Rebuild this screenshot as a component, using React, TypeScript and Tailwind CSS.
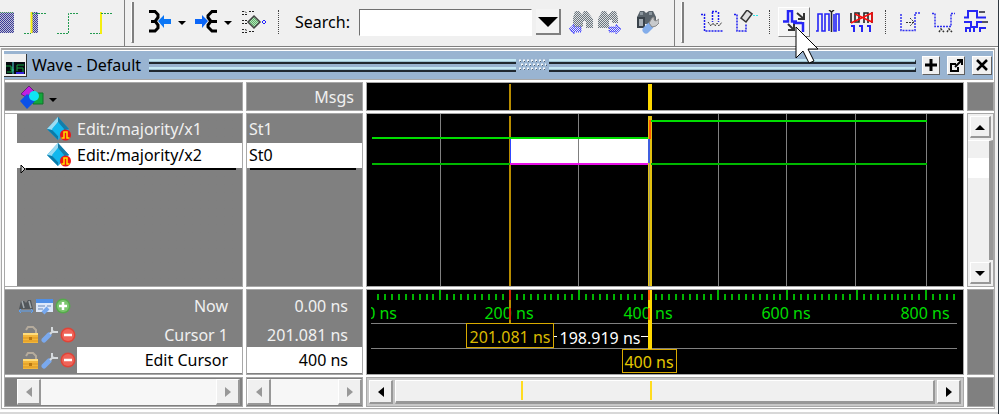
import type { ReactNode } from "react";

const BLUE = "#1c1cf0";
const GREEN = "#00dd00";
const YELLOW = "#ffd800";

function Icon({ children, w = 24, h = 24 }: { children: ReactNode; w?: number; h?: number }) {
  return (
    <svg width={w} height={h} viewBox={`0 0 ${w} ${h}`} fill="none" aria-hidden="true" className="block shrink-0">
      {children}
    </svg>
  );
}

function ToolButton({ label, className = "", children }: { label: string; className?: string; children: ReactNode }) {
  return (
    <button type="button" aria-label={label} className={`shrink-0 ${className}`}>
      {children}
    </button>
  );
}

function Caret() {
  return (
    <Icon w={12} h={24}>
      <path d="M2 11h8l-4 4z" fill="#000" />
    </Icon>
  );
}

function Handle() {
  return <div className="ml-1 h-[41px] w-[3px] shrink-0 border-r-2 border-b border-l border-[#808080] border-l-white" />;
}

function DottedRule({ className = "" }: { className?: string }) {
  return <div className={`h-6 w-0 shrink-0 border-l border-dotted border-[#444] ${className}`} />;
}

function Hatch({ id, color }: { id: string; color: string }) {
  return (
    <defs>
      <pattern id={id} width="2" height="2" patternUnits="userSpaceOnUse">
        <path d="M0 0h1v1h-1zM1 1h1v1h-1z" fill={color} />
      </pattern>
    </defs>
  );
}

function Toolbar() {
  return (
    <div className="flex h-[47px] border-b border-[#808080] bg-[#f0f0f0]">
      <div className="flex h-[46px] w-[125px] shrink-0 items-center border-r border-[#808080] pb-[2px]">
        <ToolButton label="Pattern">
          <Icon w={14}>
            <Hatch id="hatchA" color="#3a3a9a" />
            <path d="M0 2h14v21H0z" fill="#c2c2d4" />
            <path d="M0 2h14v21H0z" fill="url(#hatchA)" />
            <path d="M0 2.5h14" stroke="#3c8a5c" strokeDasharray="1 1" />
          </Icon>
        </ToolButton>
        <ToolButton label="Previous pattern" className="ml-[10px]">
          <Icon>
            <Hatch id="hatchB" color="#3a3a9a" />
            <path d="M8 2h6v21H8z" fill="#c2c2d4" />
            <path d="M8 2h6v21H8z" fill="url(#hatchB)" />
            <path d="M7.5 2v21" stroke="#f4ee10" strokeWidth="2" />
            <path d="M0 23.500h7M8 3.500h14" stroke="#239a50" strokeDasharray="2 1" />
          </Icon>
        </ToolButton>
        <ToolButton label="Rising edge" className="ml-[9px]">
          <Icon>
            <path d="M0 23.500h11.500V3.500H22" stroke="#239a50" strokeDasharray="2 1" />
          </Icon>
        </ToolButton>
        <ToolButton label="Next rising edge" className="ml-[9px]">
          <Icon>
            <path d="M11 2v22" stroke="#f4ee10" strokeWidth="2" />
            <path d="M0 23.500h10M11 3.500h11" stroke="#239a50" strokeDasharray="2 1" />
          </Icon>
        </ToolButton>
      </div>

      <div className="ml-[2px] flex h-[46px] w-[548px] shrink-0 items-center border-r border-[#808080] pb-[2px]">
        <Handle />
        <ToolButton label="Find previous" className="ml-[14px]">
          <Icon>
            <path d="M1 1.500h6l3 3v3l-3 4H3M7 11l3 4v3l-3 3H1" stroke="#000" strokeWidth="3" />
            <path d="M10 11l6-6v4h7v5h-7v4z" fill="#0b76f5" />
          </Icon>
        </ToolButton>
        <ToolButton label="Find previous options" className="ml-1"><Caret /></ToolButton>
        <ToolButton label="Find next" className="ml-[6px]">
          <Icon>
            <path d="M23 1.500h-5l-4 4v2l3 4h6M17 11l-3 4v2l4 4h5" stroke="#000" strokeWidth="3" />
            <path d="M14 11l-6-6v4H1v5h7v4z" fill="#0b66f8" />
          </Icon>
        </ToolButton>
        <ToolButton label="Find next options" className="ml-1"><Caret /></ToolButton>
        <ToolButton label="Trace" className="ml-2">
          <Icon>
            <Hatch id="hatchC" color="#5fae6a" />
            <path d="M0 1.500h3l2 2M0 4.500h5M7 1.500h5M0 10.500h5M0 13.500h5M0 19.500h3l2 1M0 22.500h5M7 21.500h5" stroke="#222" strokeDasharray="2 1" />
            <path d="M12 6l6 6-6 6-6-6z" fill="#b4e4ba" />
            <path d="M12 6l6 6-6 6-6-6z" fill="url(#hatchC)" stroke="#444" strokeWidth="1.500" />
            <path d="M22 10l2 2-2 2-2-2z" stroke="#2020ff" />
          </Icon>
        </ToolButton>
        <DottedRule className="ml-3" />
        <label htmlFor="search" className="ml-4 w-14 shrink-0">Search:</label>
        <input
          id="search"
          type="text"
          className="ml-2 h-[27px] w-[173px] shrink-0 border border-white border-t-[#707070] border-l-[#707070] bg-white px-1 outline-none"
        />
        <ToolButton label="Search history" className="ml-1 flex h-[26px] w-[25px] items-center justify-center border-r-2 border-b-2 border-[#808080] bg-[#f4f4f4]">
          <Icon w={20} h={20}><path d="M0 6h20l-10 10z" fill="#000" /></Icon>
        </ToolButton>
        <ToolButton label="Search backward" className="ml-2">
          <Icon>
            <Hatch id="hatchD" color="#6c767e" />
            <Hatch id="hatchE" color="#4a4aff" />
            <path d="M6 1h4l3 4 2-4h3l6 8v9h-7v-7h-3v6H4V8z" fill="#dde0e2" />
            <path d="M6 1h4l3 4 2-4h3l6 8v9h-7v-7h-3v6H4V8z" fill="url(#hatchD)" />
            <path d="M0 19l5-5v3h7v5H5v2z" fill="url(#hatchE)" stroke="#4c4cff" strokeDasharray="1 1" />
          </Icon>
        </ToolButton>
        <ToolButton label="Search forward" className="ml-1">
          <Icon>
            <path d="M5 1h4l2 4 4-4h4l2 7v5h-6v-3h-3v8H1V9z" fill="#dde0e2" />
            <path d="M5 1h4l2 4 4-4h4l2 7v5h-6v-3h-3v8H1V9z" fill="url(#hatchD)" />
            <path d="M24 19l-5-5v3h-7v5h7v2z" fill="url(#hatchE)" stroke="#4c4cff" strokeDasharray="1 1" />
          </Icon>
        </ToolButton>
        <ToolButton label="Search options" className="ml-[14px]">
          <Icon>
            <path d="M5 1h4l2 2 3-2h4l3 6v7H2V7z" fill="#59636b" />
            <path d="M2 7h8v11H2z" fill="#39424a" />
            <path d="M4 9h4v7H4z" fill="#a5adb4" />
            <path d="M5 2h3v3H5zM14 2h3v3h-3z" fill="#8b969e" />
            <path d="M11 20l4-4" stroke="#83adea" strokeWidth="7" strokeLinecap="round" />
            <path d="M14 13l3-5 2-1v3l2 1 3-2v4l-3 3-4 1z" fill="#c8cacc" stroke="#888" />
          </Icon>
        </ToolButton>
      </div>

      <div className="ml-[2px] flex h-[46px] min-w-0 flex-1 items-center pb-[2px]">
        <Handle />
        <ToolButton label="Insert pulse" className="ml-4">
          <Icon>
            <path d="M1 4.500h3.500v16.500h18M12 1.500h6M12.500 2v10M18.500 2v10" stroke={BLUE} strokeWidth="1.500" strokeDasharray="2 1" />
            <path d="M8 12l3 4 2-3 2 3 2-3 2 3 3-4" stroke="#333" strokeDasharray="2 1" />
          </Icon>
        </ToolButton>
        <ToolButton label="Delete edge" className="ml-[10px]">
          <Icon>
            <path d="M0 4.500h3v16.500h9v-7" stroke={BLUE} strokeWidth="1.500" strokeDasharray="2 1" />
            <path d="M13 0l5 4-6 8-5-4z" fill="#ddd" stroke="#333" strokeWidth="1.500" />
            <path d="M19 5.500h5" stroke="#2ee8ea" strokeDasharray="2 1" />
          </Icon>
        </ToolButton>
        <DottedRule className="ml-[11px]" />
        <ToolButton label="Invert" className="ml-2 flex h-[30px] w-8 items-center justify-center border border-white border-r-[#808080] border-b-[#808080] bg-[#f4f4f4]">
          <Icon>
            <path d="M1 11.500h5V1h4v10.500h5M11 13h9M21 12v10" stroke="#2525f5" strokeWidth="2.500" />
            <path d="M15 3l7 6M22 3v6h-6M6 14l6 6M12 14v6H6" stroke="#333" strokeWidth="2" />
          </Icon>
        </ToolButton>
        <ToolButton label="Mirror" className="ml-[6px]">
          <Icon>
            <path d="M0 21h2V4h4v17h3V4h4v17M18 4v17h2V4h3v17" stroke="#2525f5" strokeWidth="1.600" />
            <path d="M13 0l2.500 2L18 0M15.500 2v20" stroke="#222" strokeWidth="1.500" />
          </Icon>
        </ToolButton>
        <ToolButton label="Value" className="ml-[10px]">
          <Icon>
            <path d="M1 3v10M5 12V3h4v9zM14 13V3h4v10M22 2v11" stroke="#222" strokeWidth="1.600" />
            <path d="M1 16h3v6M9 16h3v6M17 16h3v6" stroke="#2525f5" strokeWidth="2" />
            <path d="M1 13L22 3v9L5 4" stroke="#fa0c0c" strokeWidth="1.600" />
          </Icon>
        </ToolButton>
        <DottedRule className="ml-[11px]" />
        <ToolButton label="Stretch edge" className="ml-3">
          <Icon>
            <path d="M3 4v16.500h14V3h5" stroke="#3030ef" strokeWidth="1.500" strokeDasharray="2 1" />
            <path d="M8 12.500h9M12 8l4 4-4 4" stroke="#333" strokeDasharray="2 1" />
          </Icon>
        </ToolButton>
        <ToolButton label="Move edge" className="ml-[10px]">
          <Icon>
            <path d="M0 3.500h3v13h16V3.500h4" stroke="#3030ef" strokeWidth="1.500" strokeDasharray="2 1" />
            <path d="M7 22l2-3 3 3M15 22l2-3 3 3" stroke="#333" strokeWidth="1.500" strokeDasharray="2 1" />
          </Icon>
        </ToolButton>
        <ToolButton label="Extend all waves" className="ml-2">
          <Icon>
            <path d="M0 7.500h4V1h9v6.500h9" stroke="#2525f5" strokeWidth="2" />
            <path d="M0 12h7v5h6v-5h5M2 22v-4h4v4M10 22v-5M16 22v-4h6" stroke="#2525f5" strokeWidth="2" />
            <path d="M15 2h6M18 12h6" stroke="#223" strokeWidth="1.500" />
          </Icon>
        </ToolButton>
      </div>
    </div>
  );
}

function Grooves({ end = false }: { end?: boolean }) {
  const edge = end ? "border-r border-r-[#202830]" : "";
  return (
    <div className="flex min-w-0 flex-1 flex-col gap-[3px]">
      <div className={`h-[5px] border-t-2 border-b-2 border-t-[#c4e8f5] border-b-[#202830] bg-[#9cc0d0] ${edge}`} />
      <div className={`h-[5px] border-t-2 border-b-2 border-t-[#c4e8f5] border-b-[#202830] bg-[#9cc0d0] ${edge}`} />
    </div>
  );
}

const titleButton =
  "flex h-[19px] shrink-0 items-center justify-center border border-white border-r-[#606060] border-b-[#606060] bg-[#f0f0f0]";

function TitleBar() {
  return (
    <div className="flex h-7 items-center bg-[#99b4d1] pr-[1px]">
      <Icon w={23} h={23}>
        <path d="M0 0h23v23H0z" fill="#333" />
        <path d="M0 0h22v22H0z" fill="#f0f0f0" />
        <path d="M2 8h19v12H2z" fill="#050a10" />
        <path d="M2 12h5v4h3M3 18h5v-5M13 17v-6h7M13 14h6v4" stroke="#12a03c" />
        <path d="M9 8v12" stroke="#54dde0" />
        <path d="M12 19h8" stroke="#3424dd" strokeWidth="2" />
      </Icon>
      <h1 className="ml-[5px] w-[117px] shrink-0">Wave - Default</h1>
      <Grooves />
      <Icon w={33} h={14}>
        <path d="M3 2.500h27M5 6.500h25M3 10.500h27" stroke="#f4f8fb" strokeWidth="2" strokeDasharray="2 2" />
        <path d="M4 3.500h27M6 7.500h25M4 11.500h27" stroke="#526070" strokeDasharray="1 3" />
      </Icon>
      <Grooves end />
      <div className="ml-[6px] flex gap-[7px]">
        <button type="button" aria-label="Zoom pane" className={`w-[18px] ${titleButton}`}>
          <Icon w={12} h={12}><path d="M6 0v12M0 6h12" stroke="#000" strokeWidth="3" /></Icon>
        </button>
        <button type="button" aria-label="Undock" className={`w-[18px] ${titleButton}`}>
          <Icon w={13} h={13}>
            <path d="M6 5H1v7h7V8" stroke="#000" strokeWidth="2" />
            <path d="M5 8l7-7M7 1h5v5" stroke="#000" strokeWidth="2" />
          </Icon>
        </button>
        <button type="button" aria-label="Close" className={`w-5 ${titleButton}`}>
          <Icon w={12} h={12}><path d="M1 1l10 10M11 1L1 11" stroke="#000" strokeWidth="2.500" /></Icon>
        </button>
      </div>
    </div>
  );
}

function SignalIcon() {
  return (
    <Icon w={24} h={24}>
      <path d="M11 0l11 12-11 11L0 12z" fill="#22a6dc" />
      <path d="M11 0L0 12l5 1 6-8z" fill="#9adcf3" />
      <path d="M11 0l11 12-5 1-6-8z" fill="#147da9" />
      <path d="M0 12l11 11v-4l-6-6z" fill="#087ba9" />
      <path d="M11 5l6 7-6 7-6-7z" fill="#10b8ee" />
      <circle cx="18.500" cy="18" r="5.500" fill="#ee1414" />
      <path d="M14.500 21h2.500v-6h3v6h2.500" stroke="#ffe000" strokeWidth="1.500" />
    </Icon>
  );
}

function WrenchIcon() {
  return (
    <Icon w={17} h={17}>
      <path d="M3 14l5-5" stroke="#7aa9ee" strokeWidth="5" strokeLinecap="round" />
      <path d="M9 8l3-3M11 1v4l2 1h4" stroke="#d6dadd" strokeWidth="2" />
    </Icon>
  );
}

function LockIcon() {
  return (
    <Icon w={17} h={17}>
      <path d="M4 4l2-3h5l3 3v3" stroke="#b5ab9c" strokeWidth="2" />
      <path d="M1 7h15v10H1z" fill="#f3b63a" />
      <path d="M1 7h15v2H1z" fill="#ffdc7c" />
      <path d="M1 12h15M1 15h15" stroke="#dc951e" />
      <path d="M7 11h3v3H7z" fill="#b97812" />
    </Icon>
  );
}

function RoundIcon({ add = false }: { add?: boolean }) {
  return (
    <Icon w={16} h={16}>
      <circle cx="8" cy="8" r="7.500" fill={add ? "#55aa4b" : "#df4438"} />
      <circle cx="8" cy="8" r="6" fill={add ? "#7cc66f" : "#ef6459"} />
      <path d={add ? "M4 8h8M8 4v8" : "M4 8h8"} stroke="#fff" strokeWidth="2.500" />
    </Icon>
  );
}

function CursorTools() {
  return (
    <div className="flex w-[72px] shrink-0 items-center gap-[2px] pl-[17px]">
      <button type="button" aria-label="Lock cursor"><LockIcon /></button>
      <button type="button" aria-label="Edit cursor"><WrenchIcon /></button>
      <button type="button" aria-label="Remove cursor"><RoundIcon /></button>
    </div>
  );
}

const cell = "min-w-0 overflow-hidden bg-[#808080] shadow-[0_0_0_1px_#a8a8a8]";
const darkCell = "min-w-0 overflow-hidden bg-black shadow-[0_0_0_1px_#a8a8a8]";

const gridLines = [74, 212, 352, 420, 489, 560];

function WaveTraces() {
  return (
    <svg width="100%" height="172" className="block" shapeRendering="crispEdges" aria-label="Waveforms">
      <path d="M142 2h2v170h-2z" fill="#b88c00" />
      <path d="M281 2h4v170h-4z" fill="#e2c010" />
      <path d="M282 26h1v146h-1z" fill="#a8a060" />
      <path d="M143 25h138v24H143z" fill="#fff" />
      {gridLines.map((x) => (
        <path key={x} d={`M${x - 0.5} 0v172`} stroke="#808080" />
      ))}
      <path d="M5 24h276" stroke={GREEN} strokeWidth="2" />
      <path d="M5 50h138M284 50h276" stroke="#00b800" strokeWidth="2" />
      <path d="M284 7h276" stroke={GREEN} strokeWidth="2" />
      <path d="M143 50h138" stroke="#e810e8" strokeWidth="2" />
      <path d="M143.500 25v24" stroke="#3048ff" />
      <path d="M282 25v24" stroke="#4060e0" strokeWidth="2" />
      <path d="M283 6v19" stroke="#ff5a00" strokeWidth="2" />
    </svg>
  );
}

const timeLabels = [
  { t: "200 ns", x: 142 },
  { t: "400 ns", x: 281 },
  { t: "600 ns", x: 419 },
  { t: "800 ns", x: 558 },
];

function Timeline() {
  const ticks = Array.from({ length: 84 }, (_, i) => i + 1);
  return (
    <svg width="100%" height="84" className="block text-base" fill="none" aria-label="Timeline">
      <defs>
        <clipPath id="timelineClip"><rect x="4" y="0" width="2000" height="84" /></clipPath>
      </defs>
      <g shapeRendering="crispEdges">
        {ticks.map((i) => (
          <path key={i} d={`M${Math.round(4 + i * 6.94)} ${i % 10 === 0 ? 0 : 4}V10`} stroke="#00b400" strokeWidth="2" />
        ))}
        <path d="M4 33.500h586M4 58.500h586" stroke="#808080" />
      </g>
      <g fill={GREEN} textAnchor="middle" clipPath="url(#timelineClip)">
        <text x="30" y="29" textAnchor="end">0 ns</text>
        {timeLabels.map((l) => (
          <text key={l.t} x={l.x} y="29">{l.t}</text>
        ))}
      </g>
      <g shapeRendering="crispEdges">
        <path d="M142 10h2v24h-2z" fill="#b88c00" />
        <path d="M143 0v10M143 18v12" stroke="#d02800" strokeWidth="2" />
        <path d="M281 0h4v59h-4z" fill={YELLOW} />
        <path d="M282 0v10M282 18v12" stroke="#ff6400" strokeWidth="2" />
        <path d="M187 46.500h3M274 46.500h7" stroke="#fff" />
        <rect x="99.500" y="33.500" width="87" height="24" fill="#000" stroke="#d9aa00" />
        <rect x="255.500" y="59.500" width="54" height="23" fill="#000" stroke="#d9aa00" />
      </g>
      <text x="143" y="53" fill="#d9b900" textAnchor="middle">201.081 ns</text>
      <text x="282" y="78" fill="#e6c800" textAnchor="middle">400 ns</text>
      <text x="233" y="54" fill="#fff" textAnchor="middle">198.919 ns</text>
    </svg>
  );
}

function Arrow({ dir, muted = false }: { dir: "left" | "right" | "up" | "down"; muted?: boolean }) {
  const d = {
    left: "M9 1v10L3 6z",
    right: "M3 1v10l6-5z",
    up: "M1 9h10L6 4z",
    down: "M1 4h10L6 9z",
  }[dir];
  return <Icon w={12} h={12}><path d={d} fill={muted ? "#989898" : "#000"} /></Icon>;
}

const scrollButton =
  "flex w-6 shrink-0 items-center justify-center border border-white border-r-2 border-b-2 border-r-[#989898] border-b-[#989898] bg-[#f0f0f0]";

function SmallScroll({ name }: { name: string }) {
  return (
    <div className="flex h-[26px] bg-[#f7f7f7]">
      <button type="button" aria-label={`Scroll ${name} left`} className={scrollButton}><Arrow dir="left" muted /></button>
      <div className="flex-1" />
      <button type="button" aria-label={`Scroll ${name} right`} className={scrollButton}><Arrow dir="right" muted /></button>
    </div>
  );
}

function WavePane() {
  return (
    <div className="grid grid-cols-[237px_115px_minmax(0,1fr)_25px] gap-x-[5px] gap-y-1 bg-white">
      <div className={`flex h-[27px] items-center pl-[14px] ${cell}`}>
        <button type="button" aria-label="Signal filter" className="flex items-center">
          <Icon w={26} h={24}>
            <path d="M2 9l8-8 5 5-8 6z" fill="#c21fe0" stroke="#642078" />
            <path d="M14 8h10v11H14z" fill="#14a83c" stroke="#107329" />
            <path d="M8 9l8 7-8 8-7-8z" fill="#0b51e8" />
            <circle cx="15" cy="11" r="5" fill="#10e4f4" />
          </Icon>
          <span className="ml-[2px] pt-1"><Caret /></span>
        </button>
      </div>
      <div className={`flex items-center justify-end pr-2 text-[#f0f0f0] ${cell}`}>Msgs</div>
      <div className={darkCell}>
        <svg width="100%" height="27" className="block" shapeRendering="crispEdges" aria-hidden="true">
          <path d="M142 1h2v26h-2z" fill="#b88c00" />
          <path d="M281 1h4v26h-4z" fill={YELLOW} />
        </svg>
      </div>
      <div className={cell} />

      <div className={`bg-gradient-to-r from-white from-[12px] to-[#808080] to-[12px] ${cell}`}>
        <div className="flex h-[29px] items-center pl-[42px] text-[#f0f0f0]">
          <SignalIcon />
          <span className="ml-[6px]">Edit:/majority/x1</span>
        </div>
        <div className="flex h-[25px] items-center bg-white pb-[2px] pl-[42px]">
          <SignalIcon />
          <span className="ml-[6px]">Edit:/majority/x2</span>
        </div>
        <div className="-mt-1 flex items-center pl-[15px]">
          <Icon w={6} h={10}><path d="M1 1v8l4-4z" fill="#ccc" stroke="#000" /></Icon>
          <div className="mr-[6px] h-[2px] flex-1 bg-black" />
        </div>
      </div>
      <div className={cell}>
        <div className="flex h-[29px] items-center pl-[2px] text-[#f0f0f0]">St1</div>
        <div className="flex h-[25px] items-center bg-white pb-[2px] pl-[2px]">St0</div>
        <div className="mr-[6px] ml-[3px] h-[2px] bg-black" />
      </div>
      <div className={darkCell}><WaveTraces /></div>
      <div className="flex flex-col bg-[#f0f0f0] shadow-[0_0_0_1px_#a8a8a8]">
        <button type="button" aria-label="Scroll up" className="m-[2px] flex h-[22px] items-center justify-center border border-white border-r-2 border-b-2 border-r-[#989898] border-b-[#989898]">
          <Arrow dir="up" />
        </button>
        <div className="flex-1 border-t border-r-4 border-[#989898] border-t-white pt-[17px]">
          <div className="h-5 bg-white" />
        </div>
        <button type="button" aria-label="Scroll down" className="m-[2px] flex h-[22px] items-center justify-center border border-white border-r-2 border-b-2 border-r-[#989898] border-b-[#989898]">
          <Arrow dir="down" />
        </button>
      </div>

      <div className={`text-[#f0f0f0] ${cell}`}>
        <div className="flex h-8 items-center gap-[2px] pr-[14px] pl-[13px]">
          <button type="button" aria-label="Find signal">
            <Icon w={16} h={16}>
              <path d="M3 3h3l2 2 2-3h3l2 9H1z" fill="#52575b" />
              <path d="M4 3l2 7M11 3l2 7" stroke="#a4acb0" strokeWidth="1.500" />
              <path d="M1 13h14M3 11l-2 2 2 2M13 11l2 2-2 2" stroke="#5fa2f2" />
            </Icon>
          </button>
          <button type="button" aria-label="Wave preferences">
            <Icon w={17} h={17}>
              <path d="M0 1h17v13H0z" fill="#dce8fa" />
              <path d="M0 1h17v4H0z" fill="#4f8fe6" />
              <path d="M2 8h7M2 11h5M11 8h4" stroke="#6787b8" />
              <path d="M7 15l5-5" stroke="#76a8ee" strokeWidth="4" />
            </Icon>
          </button>
          <button type="button" aria-label="Add cursor"><RoundIcon add /></button>
          <span className="ml-auto">Now</span>
        </div>
        <div className="flex h-[25px] items-stretch">
          <CursorTools />
          <span className="flex flex-1 items-center justify-end pr-[14px]">Cursor 1</span>
        </div>
        <div className="flex h-[26px] items-stretch">
          <CursorTools />
          <span className="flex flex-1 items-center justify-end bg-white pr-[14px] text-black">Edit Cursor</span>
        </div>
      </div>
      <div className={`text-[#f0f0f0] ${cell}`}>
        <div className="flex h-8 items-center justify-end pr-[14px]">0.00 ns</div>
        <div className="flex h-[25px] items-center justify-end pr-[14px]">201.081 ns</div>
        <div className="flex h-[26px] items-center justify-end bg-white pr-[14px] text-black">400 ns</div>
      </div>
      <div className={darkCell}><Timeline /></div>
      <div className={cell} />

      <div className={`py-[1px] pr-[2px] pl-3 ${cell}`}><SmallScroll name="names" /></div>
      <div className={`py-[1px] ${cell}`}><SmallScroll name="values" /></div>
      <div className="flex h-7 gap-[2px] bg-[#c8c8c8] p-[2px] shadow-[0_0_0_1px_#a8a8a8]">
        <button type="button" aria-label="Scroll waves left" className={scrollButton}><Arrow dir="left" /></button>
        <div className="min-w-0 flex-1 border border-white border-r-2 border-b-[3px] border-r-[#989898] border-b-[#989898] bg-[#f0f0f0]">
          <svg width="100%" height="19" className="block" shapeRendering="crispEdges" aria-hidden="true">
            <path d="M125.500 0v19M254.500 0v19" stroke="#ffdc20" strokeWidth="2" />
          </svg>
        </div>
        <button type="button" aria-label="Scroll waves right" className={scrollButton}><Arrow dir="right" /></button>
      </div>
      <div className={cell} />
    </div>
  );
}

export default function App() {
  return (
    <div className="relative overflow-hidden border-r border-[#303840] bg-[#f0f0f0] font-['Noto_Sans','Open_Sans',sans-serif] text-base leading-5 text-black">
      <Toolbar />
      <div className="border-t border-white">
        <div className="mr-[3px] ml-[1px] border border-[#a8a8a8] border-t-2 bg-white pt-[1px] pr-[1px] pb-[2px] pl-[2px]">
          <TitleBar />
          <div className="border-t border-b-0 border-l border-[#a8a8a8] bg-white pt-[3px]">
            <WavePane />
          </div>
        </div>
        <div className="mt-[1px] h-1 border-t-2 border-white bg-[#d8d8d8]" />
      </div>
      <svg width="26" height="40" viewBox="0 0 26 40" className="pointer-events-none absolute top-[26px] left-[795px]" aria-hidden="true">
        <path d="M1 1v31l7-7 6 12 5-2-6-12h10z" fill="#fff" stroke="#000" />
      </svg>
    </div>
  );
}
